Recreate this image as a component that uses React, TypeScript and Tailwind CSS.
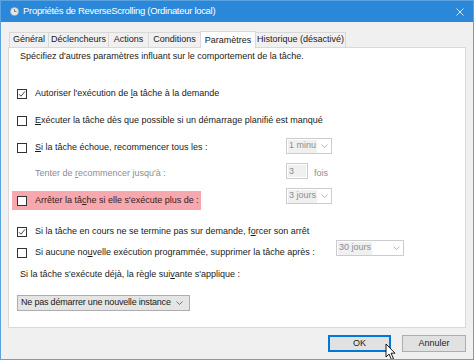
import React from 'react'

const font = { fontFamily: '"Liberation Sans", Arial, sans-serif' }

function Check({ checked = false }: { checked?: boolean }) {
  return (
    <div className="w-[10px] h-[10px] border border-[#333333] bg-white flex items-center justify-center shrink-0">
      {checked && (
        <svg width="8" height="8" viewBox="0 0 8 8">
          <path d="M1 4.2 L3 6.2 L7 1.4" fill="none" stroke="#333" strokeWidth="0.9" />
        </svg>
      )}
    </div>
  )
}

function Chevron({ color = '#8a8a8a' }: { color?: string }) {
  return (
    <svg width="7" height="4" viewBox="0 0 7 4" className="shrink-0">
      <path d="M0.5 0.5 L3.5 3.5 L6.5 0.5" fill="none" stroke={color} strokeWidth="0.8" />
    </svg>
  )
}

function DisabledSelect({ value, width }: { value: string; width: string }) {
  return (
    <div className={`${width} h-[16px] border border-[#cccccc] bg-white flex items-center pl-[1px] pr-[3px]`}>
      <div className="h-[13px] bg-[#f0f0f0] text-[#8d8d8d] px-[1px] flex items-center overflow-hidden whitespace-nowrap">{value}</div>
      <div className="ml-auto pl-[3px] flex justify-end"><Chevron color="#a6a6a6" /></div>
    </div>
  )
}

function U({ children }: { children: React.ReactNode }) {
  return <span className="underline underline-offset-[1px]">{children}</span>
}

export default function App() {
  const tabs = [
    { label: 'Général', w: 'w-[39px]' },
    { label: 'Déclencheurs', w: 'w-[60px]' },
    { label: 'Actions', w: 'w-[40px]' },
    { label: 'Conditions', w: 'w-[52px]' },
  ]

  return (
    <div style={font} className="w-[474px] h-[360px] bg-[#f0f0f0] border border-[#5aa3e0] flex flex-col text-[9px] text-[#1a1a1a] relative overflow-hidden">
      {/* Title bar */}
      <div className="h-[21px] bg-[#2b88d8] flex items-center pl-[9px] pr-[8px] text-white shrink-0">
        <svg width="9" height="9" viewBox="0 0 9 9" className="mr-[4px]">
          <circle cx="4.5" cy="4.5" r="4" fill="#e8e8e8" stroke="#9aa8b4" strokeWidth="0.6" />
          <path d="M4.5 2 V4.5 H6.5" fill="none" stroke="#556" strokeWidth="0.8" />
        </svg>
        <span className="text-[9.5px] tracking-[-0.3px]">Propriétés de ReverseScrolling (Ordinateur local)</span>
        <svg width="8" height="8" viewBox="0 0 8 8" className="ml-auto mr-[1px]">
          <path d="M0.5 0.5 L7.5 7.5 M7.5 0.5 L0.5 7.5" stroke="#ffffff" strokeWidth="0.8" />
        </svg>
      </div>

      <div className="flex flex-col px-[7px] pt-[8px]">
        {/* Tabs */}
        <div className="flex items-end h-[17px] pl-[1px] relative z-10">
          {tabs.map(t => (
            <div key={t.label} className={`${t.w} h-[15px] border-t border-l border-[#d9d9d9] bg-[#f0f0f0] flex items-center justify-center`}>
              {t.label}
            </div>
          ))}
          <div className="w-[56px] h-[17px] border-t border-l border-r border-[#d9d9d9] bg-white flex items-start justify-center pt-[2px] -mb-px">
            Paramètres
          </div>
          <div className="w-[90px] h-[15px] border-t border-r border-[#d9d9d9] bg-[#f0f0f0] flex items-center justify-center">
            Historique (désactivé)
          </div>
        </div>

        {/* Panel */}
        <div className="w-[458px] h-[281px] border border-[#d9d9d9] bg-white flex flex-col">
          <div className="h-[18px] flex items-center pl-[11px]">
            <span>Spécifiez d'autres paramètres influant sur le comportement de la tâche.</span>
          </div>

          <div className="mt-[19px] h-[18px] flex items-center pl-[8px] gap-[8px]">
            <Check checked />
            <span>Autoriser l'exécution de <U>l</U>a tâche à la demande</span>
          </div>

          <div className="mt-[9px] h-[18px] flex items-center pl-[8px] gap-[8px]">
            <Check />
            <span><U>E</U>xécuter la tâche dès que possible si un démarrage planifié est manqué</span>
          </div>

          <div className="mt-[9px] h-[18px] flex items-start pl-[8px]">
            <div className="w-[269px] h-[18px] flex items-center gap-[8px]">
              <Check />
              <span><U>S</U>i la tâche échoue, recommencer tous les :</span>
            </div>
            <div className="-mt-px">
              <DisabledSelect value="1 minu" width="w-[46px]" />
            </div>
          </div>

          <div className="mt-[6px] h-[18px] flex items-start pl-[8px]">
            <div className="w-[269px] h-[18px] flex items-end pl-[18px] text-[#8d8d8d] pb-[1px]">
              <span>Tenter de <U>r</U>ecommencer jusqu'à :</span>
            </div>
            <div className="w-[22px] h-[16px] border border-[#cccccc] bg-white p-[1px]">
              <div className="h-full bg-[#f0f0f0] text-[#8d8d8d] leading-[12px] pl-[1px]">3</div>
            </div>
            <div className="ml-[6px] self-end text-[#8d8d8d] pb-[1px]">fois</div>
          </div>

          <div className="mt-[10px] h-[19px] flex items-start pl-[8px]">
            <div className="w-[269px] h-[19px] flex items-center">
              <div className="h-[19px] -ml-[5px] w-[189px] bg-[#f7a8ae] flex items-center gap-[8px] pl-[5px]">
                <Check />
                <span className="text-[#3a2020]">Arrêter la tâ<U>c</U>he si elle s'exécute plus de :</span>
              </div>
            </div>
            <div className="-mt-[3px]">
              <DisabledSelect value="3 jours" width="w-[46px]" />
            </div>
          </div>

          <div className="mt-[13px] h-[18px] flex items-center pl-[8px] gap-[8px]">
            <Check checked />
            <span>Si la tâche en cours ne se termine pas sur demande, f<U>o</U>rcer son arrêt</span>
          </div>

          <div className="mt-[3px] h-[18px] flex items-start pl-[8px]">
            <div className="w-[319px] h-[18px] flex items-center gap-[8px]">
              <Check />
              <span>Si aucune no<U>u</U>velle exécution programmée, supprimer la tâche après :</span>
            </div>
            <div className="-mt-[4px]">
              <DisabledSelect value="30 jours" width="w-[68px]" />
            </div>
          </div>

          <div className="mt-[4px] h-[18px] flex items-center pl-[11px]">
            <span>Si la tâche s'exécute déjà, la règle sui<U>v</U>ante s'applique :</span>
          </div>

          <div className="mt-[11px] pl-[8px]">
            <div className="w-[173px] h-[16px] border border-[#adadad] bg-[#e5e5e5] flex items-center pl-[3px] pr-[6px]">
              <span className="flex-1 whitespace-nowrap tracking-[-0.2px]">Ne pas démarrer une nouvelle instance</span>
              <Chevron color="#555" />
            </div>
          </div>
        </div>

        {/* Buttons */}
        <div className="flex justify-end gap-[11px] mt-[7px]">
          <div className="w-[63px] h-[17px] border-2 border-[#0078d7] bg-[#e1e1e1] flex items-center justify-center">OK</div>
          <div className="w-[64px] h-[17px] border border-[#adadad] bg-[#e1e1e1] flex items-center justify-center">Annuler</div>
        </div>
      </div>

      {/* Mouse cursor */}
      <svg width="12" height="18" viewBox="0 0 12 18" className="absolute left-[384px] top-[342px]">
        <path d="M1 1 V14 L4 11 L6.5 16.5 L8.5 15.6 L6 10.2 H10 Z" fill="#ffffff" stroke="#000" strokeWidth="0.9" strokeLinejoin="round" />
      </svg>
    </div>
  )
}
